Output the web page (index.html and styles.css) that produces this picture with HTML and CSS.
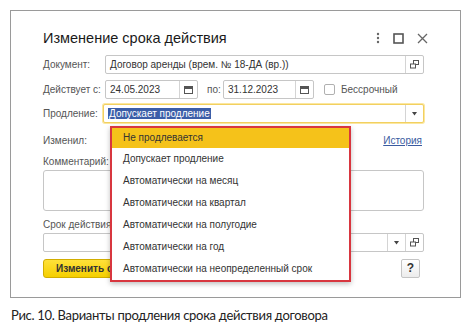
FILE: index.html
```html
<!DOCTYPE html>
<html lang="ru">
<head>
<meta charset="utf-8">
<link rel="stylesheet" href="styles.css">
</head>
<body>
<div class="frame">
  <div class="titlebar">
    <h1 class="title">Изменение срока действия</h1>
    <div class="winctl">
      <svg class="ic-more" width="4" height="12" viewBox="0 0 4 12"><circle cx="2" cy="2" r="1.2"/><circle cx="2" cy="6" r="1.2"/><circle cx="2" cy="10" r="1.2"/></svg>
      <svg class="ic-max" width="11" height="11" viewBox="0 0 11 11"><rect x="1" y="1" width="9" height="9" fill="none" stroke="#555" stroke-width="1.6"/></svg>
      <svg class="ic-close" width="11" height="11" viewBox="0 0 11 11"><path d="M1 1L10 10M10 1L1 10" stroke="#666" stroke-width="1.3"/></svg>
    </div>
  </div>

  <div class="row r-doc">
    <span class="label">Документ:</span>
    <div class="field f-doc">
      <span class="val">Договор аренды (врем. № 18-ДА (вр.))</span>
      <span class="fbtn"><svg width="9" height="9" viewBox="0 0 9 9"><rect x="3.5" y="0.5" width="5" height="4" fill="none" stroke="#555"/><rect x="0.5" y="4" width="5" height="4" fill="#fff" stroke="#555"/></svg></span>
    </div>
  </div>

  <div class="row r-date">
    <span class="label">Действует с:</span>
    <div class="field f-date">
      <span class="val">24.05.2023</span>
      <span class="fbtn"><svg width="9" height="8" viewBox="0 0 9 8"><rect x="0.5" y="0.5" width="8" height="7" fill="none" stroke="#555"/><rect x="0.5" y="0.5" width="8" height="2.5" fill="#555"/></svg></span>
    </div>
    <span class="po">по:</span>
    <div class="field f-date2">
      <span class="val">31.12.2023</span>
      <span class="fbtn"><svg width="9" height="8" viewBox="0 0 9 8"><rect x="0.5" y="0.5" width="8" height="7" fill="none" stroke="#555"/><rect x="0.5" y="0.5" width="8" height="2.5" fill="#555"/></svg></span>
    </div>
    <span class="check"></span>
    <span class="checklabel">Бессрочный</span>
  </div>

  <div class="row r-prod">
    <span class="label">Продление:</span>
    <div class="field f-prod">
      <span class="val"><span class="sel">Допускает продление</span></span>
      <span class="fbtn"><svg width="5" height="4" viewBox="0 0 5 4"><path d="M0 0H5L2.5 3.5Z" fill="#444"/></svg></span>
      <ul class="popup">
        <li class="active">Не продлевается</li>
        <li>Допускает продление</li>
        <li>Автоматически на месяц</li>
        <li>Автоматически на квартал</li>
        <li>Автоматически на полугодие</li>
        <li>Автоматически на год</li>
        <li>Автоматически на неопределенный срок</li>
      </ul>
    </div>
  </div>

  <div class="row r-changed">
    <span class="label">Изменил:</span>
    <span class="spacer"></span>
    <a class="link">История</a>
  </div>

  <div class="r-comment-label label">Комментарий:</div>
  <div class="textarea"></div>

  <div class="r-term-label label">Срок действия:</div>
  <div class="field f-term">
    <span class="val"></span>
    <span class="fbtn"><svg width="5" height="4" viewBox="0 0 5 4"><path d="M0 0H5L2.5 3.5Z" fill="#444"/></svg></span>
    <span class="fbtn"><svg width="9" height="9" viewBox="0 0 9 9"><rect x="3.5" y="0.5" width="5" height="4" fill="none" stroke="#555"/><rect x="0.5" y="4" width="5" height="4" fill="#fff" stroke="#555"/></svg></span>
  </div>

  <div class="row r-buttons">
    <span class="btn-primary">Изменить срок</span>
    <span class="spacer"></span>
    <span class="btn-help">?</span>
  </div>
</div>
<p class="caption">Рис. 10. Варианты продления срока действия договора</p>
</body>
</html>
```

FILE: styles.css
```css
* { box-sizing: border-box; }
html, body { margin: 0; padding: 0; background: #fff; }
body {
  padding: 10px 0 0 10px;
  font-family: "Liberation Sans", Arial, sans-serif;
  font-size: 10px;
  color: #333;
}
.frame {
  position: relative;
  width: 451px;
  height: 288px;
  border: 1px solid #9a9a9a;
  padding: 16px 36px 0 32px;
}
.titlebar {
  display: flex;
  align-items: center;
  height: 22px;
}
.title {
  margin: 0;
  font-weight: normal;
  font-size: 14.5px;
  color: #1a1a1a;
  flex: 1;
}
.winctl {
  display: flex;
  align-items: center;
  margin-right: -4px;
}
.ic-more { fill: #666; margin-right: 13px; }
.ic-max { margin-right: 13px; }
.row {
  display: flex;
  align-items: center;
}
.label {
  color: #555;
  white-space: nowrap;
}
.row > .label { width: 62px; }
.field {
  position: relative;
  display: flex;
  height: 19px;
  border: 1px solid #c6c6c6;
  border-radius: 2px;
  background: #fff;
}
.field .val {
  flex: 1;
  padding: 0 4px;
  line-height: 17px;
  color: #333;
  white-space: nowrap;
}
.fbtn {
  width: 18px;
  display: flex;
  align-items: center;
  justify-content: center;
  border-left: 1px solid #d4d4d4;
}
.r-doc { margin-top: 6px; }
.f-doc { flex: 1; }
.r-date { margin-top: 6px; }
.f-date { width: 93px; }
.po { margin-left: 9px; width: 16px; color: #555; }
.f-date2 { width: 91px; }
.check {
  width: 11px; height: 11px;
  border: 1px solid #b0b0b0;
  border-radius: 2px;
  margin-left: 10px;
}
.checklabel { margin-left: 6px; color: #555; }
.r-prod { margin-top: 5px; }
.r-prod > .label { width: 60px; }
.f-prod { flex: 1; border-color: #f2d060; box-shadow: 0 0 0 1px #fbe7a0; }
.sel { background: #3b5ea8; color: #fff; padding: 0 1px; }
.popup {
  position: absolute;
  left: 6px;
  top: calc(100% + 4px);
  width: 241px;
  margin: 0;
  padding: 0;
  list-style: none;
  background: #fff;
  border: 2px solid #d8363f;
  box-shadow: 0 2px 5px rgba(0,0,0,0.25);
  z-index: 5;
}
.popup li {
  height: 22px;
  line-height: 22px;
  padding-left: 11px;
  color: #333;
  white-space: nowrap;
}
.popup li.active { background: #f5c21a; height: 20px; line-height: 20px; }
.r-changed { margin-top: 8px; height: 19px; }
.spacer { flex: 1; }
.link { color: #3a5b9f; text-decoration: underline; margin-right: 2px; }
.r-comment-label { margin-top: 4px; height: 16px; line-height: 16px; }
.textarea {
  height: 41px;
  border: 1px solid #c6c6c6;
  border-radius: 3px;
}
.r-term-label { margin-top: 6px; height: 16px; line-height: 16px; }
.r-buttons { margin-top: 7px; }
.btn-primary {
  height: 19px;
  line-height: 17px;
  padding: 0 12px;
  border: 1px solid #d1ad00;
  border-radius: 3px;
  background: linear-gradient(#ffe13a, #f5cf00);
  font-weight: bold;
  color: #333;
}
.btn-help {
  width: 19px;
  height: 19px;
  border: 1px solid #c4c4c4;
  border-radius: 2px;
  background: linear-gradient(#fff, #ececec);
  text-align: center;
  line-height: 17px;
  font-weight: bold;
  font-size: 12px;
  color: #333;
  margin-right: 4px;
}
.caption {
  margin: 9px 0 0 1px;
  font-family: Lato, "Open Sans", sans-serif;
  font-size: 13px;
  letter-spacing: -0.3px;
  color: #222;
}
```
